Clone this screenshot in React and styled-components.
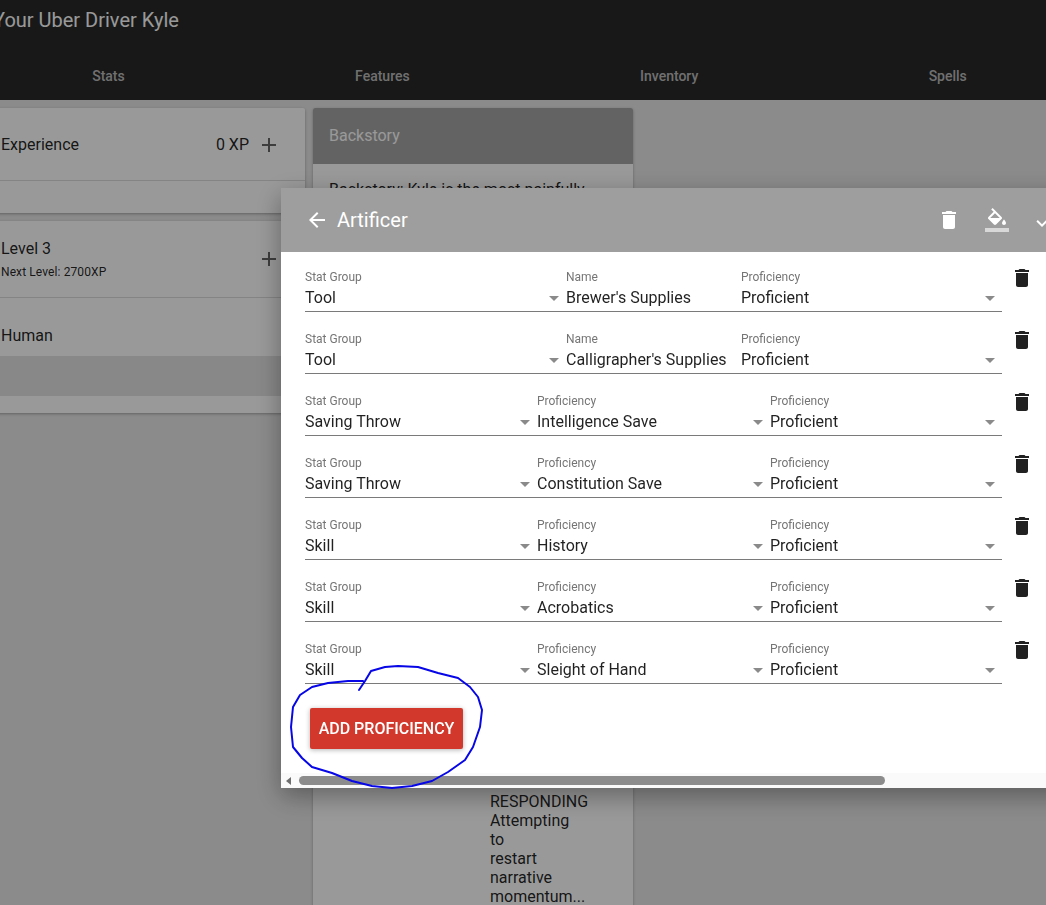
import React from "react";
import styled, { createGlobalStyle } from "styled-components";

const TRASH = "M6 19c0 1.1.9 2 2 2h8c1.1 0 2-.9 2-2V7H6v12zM19 4h-3.5l-1-1h-5l-1 1H5v2h14V4z";
const PLUS = "M19 13h-6v6h-2v-6H5v-2h6V5h2v6h6v2z";
const BACK = "M20 11H7.83l5.59-5.59L12 4l-8 8 8 8 1.41-1.41L7.83 13H20v-2z";
const CHECK = "M9 16.17L4.83 12l-1.42 1.41L9 19 21 7l-1.41-1.41z";
const FILL =
  "M16.56 8.94L7.62 0 6.21 1.41l2.38 2.38-5.15 5.15c-.59.59-.59 1.54 0 2.12l5.5 5.5c.29.29.68.44 1.06.44s.77-.15 1.06-.44l5.5-5.5c.59-.58.59-1.53 0-2.12zM5.21 10L10 5.21 14.79 10H5.21zM19 11.5s-2 2.17-2 3.5c0 1.1.9 2 2 2s2-.9 2-2c0-1.33-2-3.5-2-3.5z";

const rows = [
  { kind: "tool", group: "Tool", label: "Name", value: "Brewer's Supplies" },
  { kind: "tool", group: "Tool", label: "Name", value: "Calligrapher's Supplies" },
  { kind: "stat", group: "Saving Throw", label: "Proficiency", value: "Intelligence Save" },
  { kind: "stat", group: "Saving Throw", label: "Proficiency", value: "Constitution Save" },
  { kind: "stat", group: "Skill", label: "Proficiency", value: "History" },
  { kind: "stat", group: "Skill", label: "Proficiency", value: "Acrobatics" },
  { kind: "stat", group: "Skill", label: "Proficiency", value: "Sleight of Hand" },
];

const GlobalStyle = createGlobalStyle`
  html, body {
    margin: 0;
    height: 905px;
    overflow: hidden;
    background: #e8e8e8;
    font-family: Roboto, "Liberation Sans", sans-serif;
    color: rgba(0, 0, 0, 0.87);
  }
`;

function Icon({ d, size = 24, color = "currentColor" }) {
  return (
    <svg width={size} height={size} viewBox="0 0 24 24" fill={color} style={{ display: "block", flex: "none" }}>
      <path d={d} />
    </svg>
  );
}

function Field({ label, value, select }) {
  return (
    <FieldBox>
      <FieldLabel>{label}</FieldLabel>
      <FieldValue>{value}</FieldValue>
      {select && (
        <SelectArrow>
          <Icon d="M7 10l5 5 5-5z" color="#8a8a8a" />
        </SelectArrow>
      )}
    </FieldBox>
  );
}

export default function App() {
  return (
    <>
      <GlobalStyle />
      <Page>
        <TopBar>
          <Title>Your Uber Driver Kyle</Title>
        </TopBar>
        <Tabs>
          <Tab>Stats</Tab>
          <Tab>Features</Tab>
          <Tab>Inventory</Tab>
          <Tab>Spells</Tab>
        </Tabs>
        <Content>
          <Column>
            <Card>
              <ExperienceRow>
                <RowText>Experience</RowText>
                <RowAside>
                  <span>0 XP</span>
                  <Icon d={PLUS} color="#666" />
                </RowAside>
              </ExperienceRow>
              <CardBlank />
            </Card>
            <Card>
              <LevelRow>
                <div>
                  <RowText>Level 3</RowText>
                  <RowSubtext>Next Level: 2700XP</RowSubtext>
                </div>
                <Icon d={PLUS} color="#666" />
              </LevelRow>
              <RaceRow>Human</RaceRow>
              <Band />
              <CardTail />
            </Card>
          </Column>
          <BackstoryCard>
            <BackstoryHeader>Backstory</BackstoryHeader>
            <BackstoryBody>
              <p>Backstory: Kyle is the most painfully</p>
              <NarrowText>
                RESPONDING
                <br />
                Attempting
                <br />
                to
                <br />
                restart
                <br />
                narrative
                <br />
                momentum...
              </NarrowText>
            </BackstoryBody>
          </BackstoryCard>
        </Content>
      </Page>
      <Overlay />
      <Dialog>
        <DialogHeader>
          <Icon d={BACK} color="#fff" />
          <DialogTitle>Artificer</DialogTitle>
          <HeaderActions>
            <Icon d={TRASH} color="#fff" />
            <svg width="24" height="24" viewBox="0 0 24 24" style={{ display: "block", flex: "none" }}>
              <path d={FILL} fill="#fff" />
              <path d="M0 20h24v4H0z" fill="#fff" fillOpacity="0.6" />
            </svg>
            <Icon d={CHECK} color="#fff" />
          </HeaderActions>
        </DialogHeader>
        <DialogBody>
          {rows.map((row) => (
            <ProfRow key={row.value}>
              <ProfFields $kind={row.kind}>
                <Field label="Stat Group" value={row.group} select />
                <Field label={row.label} value={row.value} select={row.kind === "stat"} />
                <Field label="Proficiency" value="Proficient" select />
              </ProfFields>
              <RowTrash>
                <Icon d={TRASH} color="#212121" />
              </RowTrash>
            </ProfRow>
          ))}
          <AddButton>Add Proficiency</AddButton>
        </DialogBody>
        <ScrollBar>
          <ScrollArrow />
          <ScrollThumb />
        </ScrollBar>
      </Dialog>
      <Scribble viewBox="0 0 1046 905" fill="none">
        <path
          d="M359 690 L365 681 L371 671 L385 667 L398 666 L418 667 L438 673 L458 678 L470 687 L478 697 L482 710 L480 727 L473 747 L465 760 L448 772 L432 781 L412 786 L392 788 L372 786 L352 781 L332 773 L312 767 L302 758 L293 747 L291 727 L293 707 L300 695 L312 687 L328 683 L348 681 L363 681"
          stroke="#0606e6"
          strokeWidth="2"
          strokeLinecap="round"
          strokeLinejoin="round"
        />
      </Scribble>
    </>
  );
}

const Page = styled.div`
  width: 1105px;
  margin-left: -23px;
`;

const TopBar = styled.div`
  height: 52px;
  background: #282828;
  padding: 8px 0 0 16px;
  box-sizing: border-box;
`;

const Title = styled.div`
  font-size: 20px;
  font-weight: 400;
  line-height: 24px;
  color: #fff;
`;

const Tabs = styled.div`
  display: flex;
  height: 48px;
  background: #282828;
`;

const Tab = styled.div`
  flex: 1 1 auto;
  display: flex;
  align-items: center;
  justify-content: center;
  font-size: 14px;
  font-weight: 500;
  color: rgba(255, 255, 255, 0.7);
`;

const Content = styled.div`
  display: flex;
  align-items: flex-start;
  gap: 8px;
  padding: 8px;
`;

const Column = styled.div`
  width: 320px;
  display: flex;
  flex-direction: column;
  gap: 8px;
`;

const Card = styled.div`
  background: #fff;
  border-radius: 2px;
  box-shadow: 0 1px 3px rgba(0, 0, 0, 0.3);
`;

const ExperienceRow = styled.div`
  height: 73px;
  padding: 1px 24px 0 16px;
  box-sizing: border-box;
  display: flex;
  align-items: center;
  justify-content: space-between;
  border-bottom: 1px solid #dcdcdc;
`;

const RowText = styled.div`
  font-size: 16px;
  line-height: 20px;
`;

const RowAside = styled.div`
  display: flex;
  align-items: center;
  gap: 8px;
  font-size: 16px;
`;

const RowSubtext = styled.div`
  font-size: 12px;
  line-height: 16px;
  letter-spacing: 0.1px;
  margin-top: 5px;
`;

const CardBlank = styled.div`
  height: 32px;
`;

const LevelRow = styled.div`
  height: 76px;
  padding: 0 24px 0 16px;
  display: flex;
  align-items: center;
  justify-content: space-between;
  border-bottom: 1px solid #dcdcdc;
`;

const RaceRow = styled.div`
  height: 58px;
  padding: 28px 16px 0;
  box-sizing: border-box;
  font-size: 16px;
  line-height: 20px;
`;

const Band = styled.div`
  height: 40px;
  background: #e3e3e3;
`;

const CardTail = styled.div`
  height: 17px;
`;

const BackstoryCard = styled(Card)`
  width: 320px;
  height: 900px;
  overflow: hidden;
`;

const BackstoryHeader = styled.div`
  height: 56px;
  padding: 0 16px 2px;
  box-sizing: border-box;
  display: flex;
  align-items: center;
  background: #a6a6a6;
  color: #fff;
  font-size: 16px;
`;

const BackstoryBody = styled.div`
  padding: 16px;
  font-size: 16px;
  line-height: 19px;

  p {
    margin: 0;
  }
`;

const NarrowText = styled.div`
  margin: 593px 0 0 161px;
`;

const Overlay = styled.div`
  position: fixed;
  inset: 0;
  background: rgba(0, 0, 0, 0.4);
`;

const Dialog = styled.div`
  position: fixed;
  left: 281px;
  top: 188px;
  width: 800px;
  height: 600px;
  background: #fff;
  display: flex;
  flex-direction: column;
  box-shadow: 0 8px 24px rgba(0, 0, 0, 0.35);
`;

const DialogHeader = styled.div`
  height: 64px;
  flex: none;
  background: #9e9e9e;
  display: flex;
  align-items: center;
  padding-left: 24px;
  color: #fff;
`;

const DialogTitle = styled.div`
  font-size: 20px;
  font-weight: 400;
  margin-left: 8px;
`;

const HeaderActions = styled.div`
  margin-left: auto;
  display: flex;
  gap: 24px;
  padding-right: 24px;
`;

const DialogBody = styled.div`
  flex: 1;
  padding: 18px 24px 0;
`;

const ProfRow = styled.div`
  display: flex;
  align-items: flex-start;
  margin-bottom: 20px;
`;

const ProfFields = styled.div`
  width: 697px;
  display: grid;
  grid-template-columns: ${(p) => (p.$kind === "tool" ? "261px 175px 261px" : "232px 233px 232px")};
  border-bottom: 1px solid #7a7a7a;
`;

const RowTrash = styled.div`
  margin: -4px 0 0 8px;
`;

const FieldBox = styled.div`
  position: relative;
  height: 41px;
`;

const FieldLabel = styled.div`
  font-size: 12px;
  line-height: 14px;
  color: #757575;
`;

const FieldValue = styled.div`
  font-size: 16px;
  line-height: 20px;
  margin-top: 4px;
  white-space: nowrap;
`;

const SelectArrow = styled.div`
  position: absolute;
  right: 0;
  top: 16px;
`;

const AddButton = styled.button`
  display: block;
  height: 41px;
  width: 153px;
  margin: 24px 0 0 5px;
  padding: 0;
  border: 0;
  border-radius: 2px;
  background: #d2392c;
  color: #fff;
  font-family: Roboto, sans-serif;
  font-size: 16px;
  font-weight: 500;
  text-transform: uppercase;
  box-shadow: 0 1px 5px rgba(0, 0, 0, 0.3);
`;

const ScrollBar = styled.div`
  height: 15px;
  flex: none;
  background: #fafafa;
  display: flex;
  align-items: center;
`;

const ScrollArrow = styled.div`
  width: 0;
  height: 0;
  margin-left: 5px;
  border: 4px solid transparent;
  border-left: 0;
  border-right: 5px solid #6e6e6e;
`;

const ScrollThumb = styled.div`
  width: 586px;
  height: 9px;
  margin-left: 8px;
  border-radius: 5px;
  background: #8c8c8c;
`;

const Scribble = styled.svg`
  position: fixed;
  inset: 0;
  width: 1046px;
  height: 905px;
  pointer-events: none;
`;
